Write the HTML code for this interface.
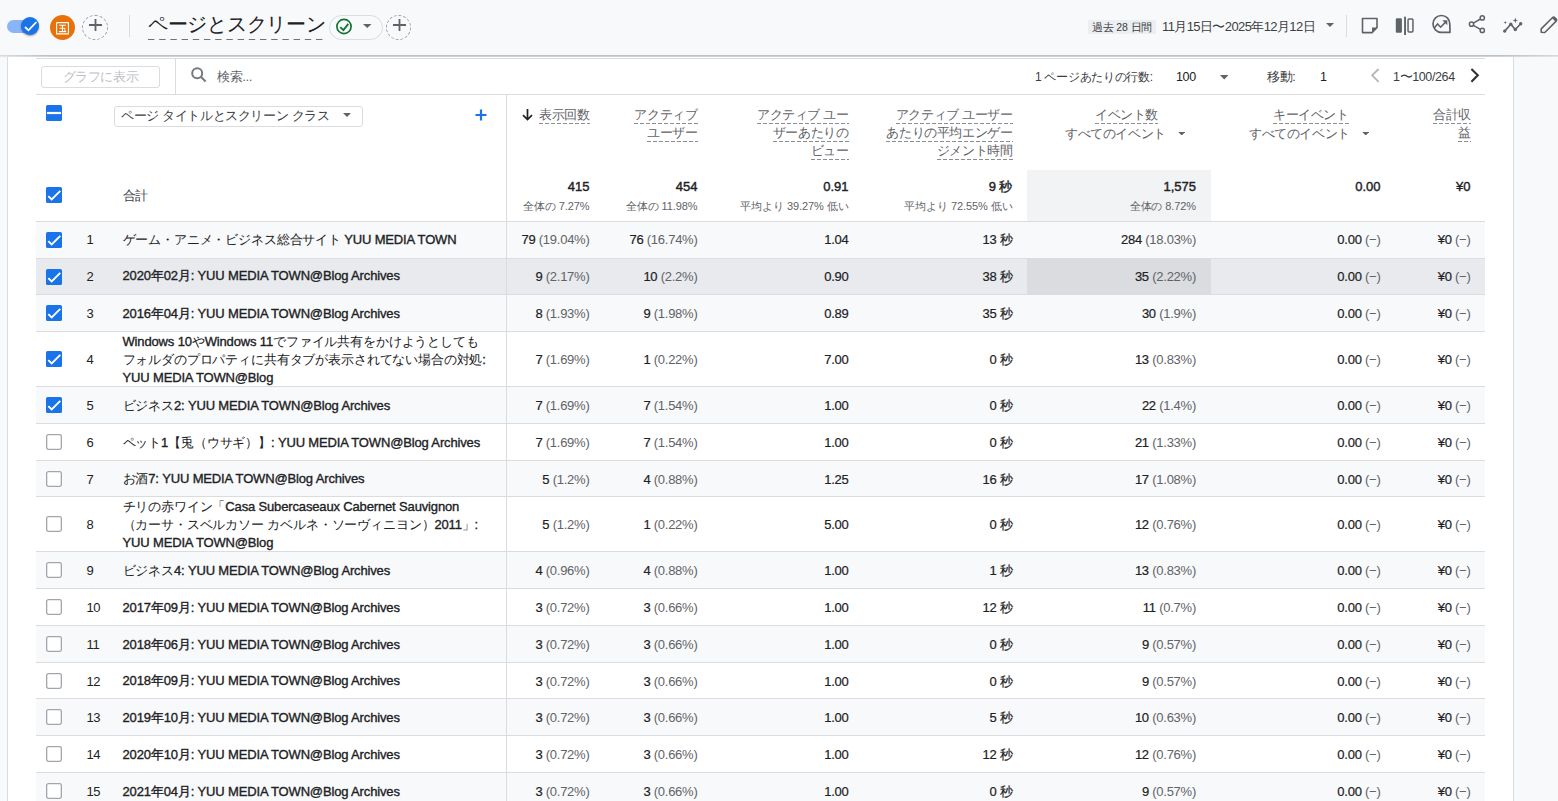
<!DOCTYPE html>
<html lang="ja"><head><meta charset="utf-8"><title>GA</title>
<style>
*{box-sizing:border-box;margin:0;padding:0}
html,body{letter-spacing:-0.38px;width:1558px;height:801px;overflow:hidden;background:#f8f9fa;font-family:"Liberation Sans",sans-serif;color:#202124;position:relative}
.abs{position:absolute;white-space:nowrap}
.hdr{position:absolute;left:0;top:0;width:1558px;height:55px;background:#f8f9fa}
.shadow{position:absolute;left:0;top:55px;width:1558px;height:1px;background:linear-gradient(90deg,#dcdcdc 0,#c0c0c0 50px,#c0c0c0 1500px,#d8d8d8 1558px)}
.shadow2{position:absolute;left:0;top:56px;width:1558px;height:1px;background:linear-gradient(90deg,#e6e6e6 0,#d2d2d2 50px,#d2d2d2 1500px,#e4e4e4 1558px)}
.panel{position:absolute;left:7px;top:57px;width:1507px;height:744px;background:#fff;border-left:1px solid #dadce0;border-right:1px solid #dadce0}
.hl{position:absolute;height:1px;background:#dadce0}
.vl{position:absolute;width:1px;background:#dadce0}
.row{position:absolute;left:36px;width:1449px}
.cb{position:absolute;left:46px;width:16px;height:16px}
.cb svg{display:block}
.num{position:absolute;left:86.5px;font-size:13px;color:#202124}
.ttl{position:absolute;left:122.5px;font-size:13px;line-height:18.33px;color:#202124}
.ttl .j{letter-spacing:-0.15px}
.ttl b{font-weight:normal;letter-spacing:-0.15px;-webkit-text-stroke:0.35px #202124}
.val{position:absolute;font-size:13px;letter-spacing:-0.25px;text-align:right;color:#202124;-webkit-text-stroke:0.2px #202124}
.val i{font-style:normal;color:#5f6368;-webkit-text-stroke:0}
.hd{position:absolute;font-size:13px;color:#5f6368;text-align:right;line-height:18px}
.hd u{text-decoration:none;padding-bottom:2px;background-image:linear-gradient(90deg,#8a8e93 4px,transparent 4px);background-size:6px 1px;background-repeat:repeat-x;background-position:0 100%}
.tot{position:absolute;font-size:13px;font-weight:normal;-webkit-text-stroke:0.4px #202124;letter-spacing:0px;text-align:right;color:#202124}
.sub{position:absolute;font-size:11px;letter-spacing:-0.1px;text-align:right;color:#5f6368}
</style></head><body>

<div class="hdr"></div>
<div class="abs" style="left:7px;top:20px;width:26px;height:13px;border-radius:7px;background:#8ab4f8"></div>
<div class="abs" style="left:21px;top:17px;width:18px;height:18px;border-radius:50%;background:#1a73e8;box-shadow:0 1px 2px rgba(0,0,0,.4)"><svg width="18" height="18" viewBox="0 0 18 18" style="display:block"><path d="M4 10 L7.5 13.3 L15.4 5" fill="none" stroke="#fff" stroke-width="1.8"/></svg></div>
<div class="abs" style="left:50px;top:15px;width:25px;height:25px;border-radius:50%;background:#e8710a"></div>
<svg class="abs" style="left:56px;top:22px" width="13" height="13" viewBox="0 0 13 13"><path d="M0.6 0.6H12.4V12.6M0.6 0.6V12.6M0.6 11.9H12.4M3.2 3.2H9.8M3.6 6.3H9.4M2.8 9.6H10.2M6.5 3.2V9.6M8.3 7.4L9.4 8.6" fill="none" stroke="#fff" stroke-width="1.1"/></svg>
<div class="abs" style="left:82px;top:15px;width:26px;height:25px;border-radius:50%;border:1px dashed #9aa0a6"></div>
<svg class="abs" style="left:89px;top:19px" width="13" height="12" viewBox="0 0 13 12"><path d="M6.5 0V12M0 6H13" stroke="#5f6368" stroke-width="1.8"/></svg>
<div class="vl" style="left:129px;top:15px;height:22px"></div>
<div class="abs" style="left:148px;top:11.5px;font-size:19.5px;line-height:24px;color:#202124;letter-spacing:-0.3px">ページとスクリーン</div>
<div class="abs" style="left:329px;top:15px;width:53.5px;height:25px;border-radius:13px;border:1px solid #dadce0;background:#f8f9fa"></div>
<svg class="abs" style="left:335px;top:17.5px" width="18" height="17" viewBox="0 0 18 17"><circle cx="9" cy="8.5" r="7.1" fill="none" stroke="#137333" stroke-width="1.7"/><path d="M5.2 9.1 L8.4 12.1 L13.3 5.9" fill="none" stroke="#137333" stroke-width="1.8"/></svg>
<svg class="abs" style="left:363px;top:24px" width="8.5" height="4" viewBox="0 0 10 5" preserveAspectRatio="none"><path d="M0 0H10L5 5Z" fill="#5f6368"/></svg>
<div class="abs" style="left:386px;top:15px;width:25px;height:25px;border-radius:50%;border:1px dashed #9aa0a6"></div>
<svg class="abs" style="left:392.5px;top:19px" width="13" height="12" viewBox="0 0 13 12"><path d="M6.5 0V12M0 6H13" stroke="#5f6368" stroke-width="1.8"/></svg>
<svg class="abs" style="left:148px;top:39px" width="177" height="1" viewBox="0 0 177 1"><line x1="0" y1="0.5" x2="177" y2="0.5" stroke="#6f7378" stroke-width="1" stroke-dasharray="6.4 4.8"/></svg>
<div class="abs" style="left:1088px;top:20px;width:68px;height:14px;background:#eceef1;font-size:10.5px;line-height:15px;color:#3c4043;text-align:center;letter-spacing:-0.1px">過去 28 日間</div>
<div class="abs" style="left:1162px;top:16.5px;font-size:13px;line-height:20px;color:#3c4043;letter-spacing:-0.6px">11月15日〜2025年12月12日</div>
<svg class="abs" style="left:1326px;top:23px" width="8" height="4" preserveAspectRatio="none" viewBox="0 0 10 5"><path d="M0 0H10L5 5Z" fill="#5f6368"/></svg>
<div class="vl" style="left:1346px;top:15px;height:22px"></div>
<svg class="abs" style="left:0;top:0" width="1558" height="55" viewBox="0 0 1558 55">
<g fill="none" stroke="#5f6368" stroke-width="1.6" stroke-linejoin="round">
<path d="M362.5 18.5H377V27.5L372 32.6H362.5Z" transform="translate(1000 0)"/>
</g>
<path d="M1372 33.2V27.6H1377.8Z" fill="#5f6368"/>
<rect x="1395.8" y="18.3" width="6.1" height="14.5" rx="1.2" fill="#5f6368"/>
<rect x="1404.1" y="16.7" width="1.9" height="18.3" fill="#5f6368"/>
<rect x="1408.05" y="19.05" width="4.9" height="13" rx="1" fill="none" stroke="#5f6368" stroke-width="1.5"/>
<path d="M1450 32.3H1441.3A8.4 8.4 0 1 1 1449.8 23.9Z" fill="none" stroke="#5f6368" stroke-width="1.7" stroke-linejoin="round"/>
<path d="M1434 28.2L1437.6 24L1440.6 27.2L1446 21.6" fill="none" stroke="#5f6368" stroke-width="1.6"/>
<path d="M1442.3 20.3H1447.3V25.3Z" fill="#5f6368"/>
<g fill="none" stroke="#5f6368" stroke-width="1.5">
<circle cx="1482.3" cy="17.9" r="2.1"/><circle cx="1471.5" cy="24.2" r="2.1"/><circle cx="1482.3" cy="30.4" r="2.1"/>
<path d="M1473.4 23.1L1480.4 19M1473.4 25.3L1480.4 29.3"/>
</g>
<path d="M1504.7 31.1L1510.8 24.2L1515.3 29.5L1520.7 23.8" fill="none" stroke="#5f6368" stroke-width="1.6"/>
<circle cx="1504.7" cy="31.1" r="1.7" fill="#5f6368"/><circle cx="1510.8" cy="24.2" r="1.7" fill="#5f6368"/><circle cx="1515.3" cy="29.5" r="1.7" fill="#5f6368"/><circle cx="1520.7" cy="23.8" r="1.7" fill="#5f6368"/>
<path d="M1515.3 17.6L1516 19.7L1518.1 20.4L1516 21.1L1515.3 23.2L1514.6 21.1L1512.5 20.4L1514.6 19.7Z" fill="#5f6368"/>
<path d="M1505.2 20.8L1505.6 22.1L1506.9 22.5L1505.6 22.9L1505.2 24.2L1504.8 22.9L1503.5 22.5L1504.8 22.1Z" fill="#5f6368"/>
<path d="M1541.2 32.2V28.9L1552.6 17.5A1.2 1.2 0 0 1 1554.3 17.5L1556.2 19.4A1.2 1.2 0 0 1 1556.2 21.1L1544.8 32.5Z" fill="none" stroke="#5f6368" stroke-width="1.6" stroke-linejoin="round"/>
<path d="M1552 18.2L1553.3 16.9A1.2 1.2 0 0 1 1555 16.9L1556.9 18.8A1.2 1.2 0 0 1 1556.9 20.5L1555.6 21.8Z" fill="#5f6368"/>
</svg>
<div class="shadow"></div><div class="shadow2"></div>
<div class="panel"></div>
<div class="hl" style="left:36px;top:58px;width:1449px"></div>
<div class="hl" style="left:36px;top:94px;width:1449px"></div>
<div class="vl" style="left:175px;top:59px;height:35px"></div>
<div class="abs" style="left:41px;top:66px;width:119px;height:22px;border:1px solid #dadce0;border-radius:3px;font-size:12.5px;line-height:20px;color:#bdc1c6;text-align:center">グラフに表示</div>
<svg class="abs" style="left:190px;top:66px" width="18" height="18" viewBox="0 0 18 18"><circle cx="7.2" cy="7.2" r="5" fill="none" stroke="#757a80" stroke-width="2"/><path d="M10.6 10.6L15.6 15.6" stroke="#757a80" stroke-width="2.1"/></svg>
<div class="abs" style="left:217px;top:67.5px;font-size:13px;line-height:18px;color:#5f6368">検索...</div>
<div class="abs" style="left:1035px;top:67.5px;font-size:12px;line-height:18px;color:#3c4043;letter-spacing:-0.3px">1 ページあたりの行数:</div>
<div class="abs" style="left:1176px;top:67.5px;font-size:12.5px;line-height:18px;color:#202124">100</div>
<svg class="abs" style="left:1220px;top:75px" width="8.5" height="4.5" preserveAspectRatio="none" viewBox="0 0 10 5"><path d="M0 0H10L5 5Z" fill="#5f6368"/></svg>
<div class="abs" style="left:1267px;top:67.5px;font-size:12.5px;line-height:18px;color:#3c4043">移動:</div>
<div class="abs" style="left:1320px;top:67.5px;font-size:12.5px;line-height:18px;color:#202124">1</div>
<svg class="abs" style="left:1369.5px;top:68px" width="10" height="15" viewBox="0 0 10 15"><path d="M8.6 1L2.2 7.3L8.6 13.8" fill="none" stroke="#b4b8bd" stroke-width="1.9"/></svg>
<div class="abs" style="left:1393px;top:68px;font-size:12.5px;line-height:18px;color:#3c4043">1〜100/264</div>
<svg class="abs" style="left:1470px;top:68px" width="10" height="15" viewBox="0 0 10 15"><path d="M1.4 1L7.8 7.3L1.4 13.8" fill="none" stroke="#303134" stroke-width="2.1"/></svg>
<div class="cb" style="top:105px"><svg width="16" height="16" viewBox="0 0 16 16"><rect x="0" y="0" width="16" height="16" rx="1.6" fill="#1a73e8"/><rect x="0.9" y="6.9" width="14.2" height="2.2" fill="#fff"/></svg></div>
<div class="abs" style="left:114px;top:105.5px;width:249px;height:21px;border:1px solid #dadce0;border-radius:3px;background:#fff"></div>
<div class="abs" style="left:121px;top:107px;font-size:13px;line-height:18px;color:#3c4043">ページ タイトルとスクリーン クラス</div>
<svg class="abs" style="left:343px;top:113px" width="8" height="4" viewBox="0 0 10 5"><path d="M0 0H10L5 5Z" fill="#5f6368"/></svg>
<svg class="abs" style="left:475px;top:109px" width="12" height="12" viewBox="0 0 12 12"><path d="M6 0.5V11.5M0.5 6H11.5" stroke="#1a73e8" stroke-width="2.2"/></svg>
<svg class="abs" style="left:521px;top:108px" width="13" height="13" viewBox="0 0 13 13"><path d="M6.5 1V11.5M2 7.2L6.5 11.5L11 7.2" fill="none" stroke="#202124" stroke-width="1.7"/></svg>
<div class="hd" style="right:968.5px;top:106px"><u>表示回数</u></div>
<div class="hd" style="right:860.5px;top:106px"><u>アクティブ</u><br><u>ユーザー</u></div>
<div class="hd" style="right:709.5px;top:106px"><u>アクティブ ユー</u><br><u>ザーあたりの</u><br><u>ビュー</u></div>
<div class="hd" style="right:545.5px;top:106px"><u>アクティブ ユーザー</u><br><u>あたりの平均エンゲー</u><br><u>ジメント時間</u></div>
<div class="hd" style="left:1095px;top:106px"><u>イベント数</u></div>
<div class="abs" style="left:1065px;top:125px;font-size:13px;line-height:18px;color:#5f6368">すべてのイベント</div>
<svg class="abs" style="left:1177.5px;top:131.5px" width="7.5" height="3.5" viewBox="0 0 10 5"><path d="M0 0H10L5 5Z" fill="#5f6368"/></svg>
<div class="hd" style="left:1273px;top:106px"><u>キーイベント</u></div>
<div class="abs" style="left:1249px;top:125px;font-size:13px;line-height:18px;color:#5f6368">すべてのイベント</div>
<svg class="abs" style="left:1361.5px;top:131.5px" width="7.5" height="3.5" viewBox="0 0 10 5"><path d="M0 0H10L5 5Z" fill="#5f6368"/></svg>
<div class="hd" style="right:87px;top:106px"><u>合計収</u><br><u>益</u></div>
<div class="abs" style="left:1027px;top:170px;width:184px;height:51.5px;background:#f1f3f4"></div>
<div class="cb" style="top:187px"><svg width="16" height="16" viewBox="0 0 16 16"><rect x="0" y="0" width="16" height="16" rx="1.6" fill="#1a73e8"/><path d="M2.3 9.1 L5.7 12.5 L14.3 3.9" fill="none" stroke="#fff" stroke-width="1.9"/></svg></div>
<div class="abs" style="left:122.5px;top:187px;font-size:13px;line-height:18px;color:#3c4043">合計</div>
<div class="tot" style="right:968.5px;top:178.5px;line-height:16px">415</div>
<div class="sub" style="right:968.5px;top:199px;line-height:15px">全体の 7.27%</div>
<div class="tot" style="right:860.5px;top:178.5px;line-height:16px">454</div>
<div class="sub" style="right:860.5px;top:199px;line-height:15px">全体の 11.98%</div>
<div class="tot" style="right:709.5px;top:178.5px;line-height:16px">0.91</div>
<div class="sub" style="right:709.5px;top:199px;line-height:15px">平均より 39.27% 低い</div>
<div class="tot" style="right:545.5px;top:178.5px;line-height:16px">9 秒</div>
<div class="sub" style="right:545.5px;top:199px;line-height:15px">平均より 72.55% 低い</div>
<div class="tot" style="right:362px;top:178.5px;line-height:16px">1,575</div>
<div class="sub" style="right:362px;top:199px;line-height:15px">全体の 8.72%</div>
<div class="tot" style="right:177.5px;top:178.5px;line-height:16px">0.00</div>
<div class="tot" style="right:87.5px;top:178.5px;line-height:16px">¥0</div>
<div class="hl" style="left:36px;top:221px;width:1449px"></div>
<div class="row" style="top:222px;height:36px;background:#f8f9fa"></div>
<div class="cb" style="top:232.20px"><svg width="16" height="16" viewBox="0 0 16 16"><rect x="0" y="0" width="16" height="16" rx="1.6" fill="#1a73e8"/><path d="M2.3 9.1 L5.7 12.5 L14.3 3.9" fill="none" stroke="#fff" stroke-width="1.9"/></svg></div>
<div class="num" style="top:231.00px;line-height:18px">1</div>
<div class="ttl" style="top:230.84px"><span class=j>ゲーム・アニメ・ビジネス総合サイト</span> <b>YUU MEDIA TOWN</b></div>
<div class="val" style="right:968.5px;top:231.00px;line-height:18px">79 <i>(19.04%)</i></div>
<div class="val" style="right:860.5px;top:231.00px;line-height:18px">76 <i>(16.74%)</i></div>
<div class="val" style="right:709.5px;top:231.00px;line-height:18px">1.04</div>
<div class="val" style="right:545.5px;top:231.00px;line-height:18px">13 秒</div>
<div class="val" style="right:362px;top:231.00px;line-height:18px">284 <i>(18.03%)</i></div>
<div class="val" style="right:177.5px;top:231.00px;line-height:18px">0.00 <i>(−)</i></div>
<div class="val" style="right:87.5px;top:231.00px;line-height:18px">¥0 <i>(−)</i></div>
<div class="row" style="top:259px;height:35px;background:#e8eaed"></div>
<div class="abs" style="left:1027px;top:259px;width:184px;height:35px;background:#dadce0"></div>
<div class="cb" style="top:268.70px"><svg width="16" height="16" viewBox="0 0 16 16"><rect x="0" y="0" width="16" height="16" rx="1.6" fill="#1a73e8"/><path d="M2.3 9.1 L5.7 12.5 L14.3 3.9" fill="none" stroke="#fff" stroke-width="1.9"/></svg></div>
<div class="num" style="top:267.50px;line-height:18px">2</div>
<div class="ttl" style="top:267.33px"><b>2020年02月: YUU MEDIA TOWN@Blog Archives</b></div>
<div class="val" style="right:968.5px;top:267.50px;line-height:18px">9 <i>(2.17%)</i></div>
<div class="val" style="right:860.5px;top:267.50px;line-height:18px">10 <i>(2.2%)</i></div>
<div class="val" style="right:709.5px;top:267.50px;line-height:18px">0.90</div>
<div class="val" style="right:545.5px;top:267.50px;line-height:18px">38 秒</div>
<div class="val" style="right:362px;top:267.50px;line-height:18px">35 <i>(2.22%)</i></div>
<div class="val" style="right:177.5px;top:267.50px;line-height:18px">0.00 <i>(−)</i></div>
<div class="val" style="right:87.5px;top:267.50px;line-height:18px">¥0 <i>(−)</i></div>
<div class="row" style="top:295px;height:36px;background:#f8f9fa"></div>
<div class="cb" style="top:305.20px"><svg width="16" height="16" viewBox="0 0 16 16"><rect x="0" y="0" width="16" height="16" rx="1.6" fill="#1a73e8"/><path d="M2.3 9.1 L5.7 12.5 L14.3 3.9" fill="none" stroke="#fff" stroke-width="1.9"/></svg></div>
<div class="num" style="top:305.00px;line-height:18px">3</div>
<div class="ttl" style="top:304.83px"><b>2016年04月: YUU MEDIA TOWN@Blog Archives</b></div>
<div class="val" style="right:968.5px;top:305.00px;line-height:18px">8 <i>(1.93%)</i></div>
<div class="val" style="right:860.5px;top:305.00px;line-height:18px">9 <i>(1.98%)</i></div>
<div class="val" style="right:709.5px;top:305.00px;line-height:18px">0.89</div>
<div class="val" style="right:545.5px;top:305.00px;line-height:18px">35 秒</div>
<div class="val" style="right:362px;top:305.00px;line-height:18px">30 <i>(1.9%)</i></div>
<div class="val" style="right:177.5px;top:305.00px;line-height:18px">0.00 <i>(−)</i></div>
<div class="val" style="right:87.5px;top:305.00px;line-height:18px">¥0 <i>(−)</i></div>
<div class="row" style="top:332px;height:54px;background:#fff"></div>
<div class="cb" style="top:351.20px"><svg width="16" height="16" viewBox="0 0 16 16"><rect x="0" y="0" width="16" height="16" rx="1.6" fill="#1a73e8"/><path d="M2.3 9.1 L5.7 12.5 L14.3 3.9" fill="none" stroke="#fff" stroke-width="1.9"/></svg></div>
<div class="num" style="top:351.00px;line-height:18px">4</div>
<div class="ttl" style="top:332.50px"><b>Windows 10</b><span class=j>や</span><b>Windows 11</b><span class=j>でファイル共有をかけようとしても</span><br><span class=j>フォルダのプロパティに共有タブが表示されてない場合の対処</span><b>:</b><br><b>YUU MEDIA TOWN@Blog</b></div>
<div class="val" style="right:968.5px;top:351.00px;line-height:18px">7 <i>(1.69%)</i></div>
<div class="val" style="right:860.5px;top:351.00px;line-height:18px">1 <i>(0.22%)</i></div>
<div class="val" style="right:709.5px;top:351.00px;line-height:18px">7.00</div>
<div class="val" style="right:545.5px;top:351.00px;line-height:18px">0 秒</div>
<div class="val" style="right:362px;top:351.00px;line-height:18px">13 <i>(0.83%)</i></div>
<div class="val" style="right:177.5px;top:351.00px;line-height:18px">0.00 <i>(−)</i></div>
<div class="val" style="right:87.5px;top:351.00px;line-height:18px">¥0 <i>(−)</i></div>
<div class="row" style="top:387px;height:36px;background:#f8f9fa"></div>
<div class="cb" style="top:397.20px"><svg width="16" height="16" viewBox="0 0 16 16"><rect x="0" y="0" width="16" height="16" rx="1.6" fill="#1a73e8"/><path d="M2.3 9.1 L5.7 12.5 L14.3 3.9" fill="none" stroke="#fff" stroke-width="1.9"/></svg></div>
<div class="num" style="top:397.00px;line-height:18px">5</div>
<div class="ttl" style="top:396.83px"><span class=j>ビジネス</span><b>2: YUU MEDIA TOWN@Blog Archives</b></div>
<div class="val" style="right:968.5px;top:397.00px;line-height:18px">7 <i>(1.69%)</i></div>
<div class="val" style="right:860.5px;top:397.00px;line-height:18px">7 <i>(1.54%)</i></div>
<div class="val" style="right:709.5px;top:397.00px;line-height:18px">1.00</div>
<div class="val" style="right:545.5px;top:397.00px;line-height:18px">0 秒</div>
<div class="val" style="right:362px;top:397.00px;line-height:18px">22 <i>(1.4%)</i></div>
<div class="val" style="right:177.5px;top:397.00px;line-height:18px">0.00 <i>(−)</i></div>
<div class="val" style="right:87.5px;top:397.00px;line-height:18px">¥0 <i>(−)</i></div>
<div class="row" style="top:424px;height:36px;background:#fff"></div>
<div class="cb" style="top:434.20px"><svg width="16" height="16" viewBox="0 0 16 16"><rect x="0.65" y="0.65" width="14.7" height="14.7" rx="1.8" fill="#fff" stroke="#a2a6ab" stroke-width="1.3"/></svg></div>
<div class="num" style="top:434.00px;line-height:18px">6</div>
<div class="ttl" style="top:433.83px"><span class=j>ペット</span><b>1</b><span class=j>【兎（ウサギ）】</span><b>: YUU MEDIA TOWN@Blog Archives</b></div>
<div class="val" style="right:968.5px;top:434.00px;line-height:18px">7 <i>(1.69%)</i></div>
<div class="val" style="right:860.5px;top:434.00px;line-height:18px">7 <i>(1.54%)</i></div>
<div class="val" style="right:709.5px;top:434.00px;line-height:18px">1.00</div>
<div class="val" style="right:545.5px;top:434.00px;line-height:18px">0 秒</div>
<div class="val" style="right:362px;top:434.00px;line-height:18px">21 <i>(1.33%)</i></div>
<div class="val" style="right:177.5px;top:434.00px;line-height:18px">0.00 <i>(−)</i></div>
<div class="val" style="right:87.5px;top:434.00px;line-height:18px">¥0 <i>(−)</i></div>
<div class="row" style="top:461px;height:35px;background:#f8f9fa"></div>
<div class="cb" style="top:470.70px"><svg width="16" height="16" viewBox="0 0 16 16"><rect x="0.65" y="0.65" width="14.7" height="14.7" rx="1.8" fill="#fff" stroke="#a2a6ab" stroke-width="1.3"/></svg></div>
<div class="num" style="top:470.50px;line-height:18px">7</div>
<div class="ttl" style="top:470.33px"><span class=j>お酒</span><b>7: YUU MEDIA TOWN@Blog Archives</b></div>
<div class="val" style="right:968.5px;top:470.50px;line-height:18px">5 <i>(1.2%)</i></div>
<div class="val" style="right:860.5px;top:470.50px;line-height:18px">4 <i>(0.88%)</i></div>
<div class="val" style="right:709.5px;top:470.50px;line-height:18px">1.25</div>
<div class="val" style="right:545.5px;top:470.50px;line-height:18px">16 秒</div>
<div class="val" style="right:362px;top:470.50px;line-height:18px">17 <i>(1.08%)</i></div>
<div class="val" style="right:177.5px;top:470.50px;line-height:18px">0.00 <i>(−)</i></div>
<div class="val" style="right:87.5px;top:470.50px;line-height:18px">¥0 <i>(−)</i></div>
<div class="row" style="top:497px;height:54px;background:#fff"></div>
<div class="cb" style="top:516.20px"><svg width="16" height="16" viewBox="0 0 16 16"><rect x="0.65" y="0.65" width="14.7" height="14.7" rx="1.8" fill="#fff" stroke="#a2a6ab" stroke-width="1.3"/></svg></div>
<div class="num" style="top:516.00px;line-height:18px">8</div>
<div class="ttl" style="top:497.50px"><span class=j>チリの赤ワイン「</span><b>Casa Subercaseaux Cabernet Sauvignon</b><br><span class=j>（カーサ・スベルカソー カベルネ・ソーヴィニヨン）</span><b>2011</b><span class=j>」</span><b>:</b><br><b>YUU MEDIA TOWN@Blog</b></div>
<div class="val" style="right:968.5px;top:516.00px;line-height:18px">5 <i>(1.2%)</i></div>
<div class="val" style="right:860.5px;top:516.00px;line-height:18px">1 <i>(0.22%)</i></div>
<div class="val" style="right:709.5px;top:516.00px;line-height:18px">5.00</div>
<div class="val" style="right:545.5px;top:516.00px;line-height:18px">0 秒</div>
<div class="val" style="right:362px;top:516.00px;line-height:18px">12 <i>(0.76%)</i></div>
<div class="val" style="right:177.5px;top:516.00px;line-height:18px">0.00 <i>(−)</i></div>
<div class="val" style="right:87.5px;top:516.00px;line-height:18px">¥0 <i>(−)</i></div>
<div class="row" style="top:552px;height:36px;background:#f8f9fa"></div>
<div class="cb" style="top:562.20px"><svg width="16" height="16" viewBox="0 0 16 16"><rect x="0.65" y="0.65" width="14.7" height="14.7" rx="1.8" fill="#fff" stroke="#a2a6ab" stroke-width="1.3"/></svg></div>
<div class="num" style="top:562.00px;line-height:18px">9</div>
<div class="ttl" style="top:561.84px"><span class=j>ビジネス</span><b>4: YUU MEDIA TOWN@Blog Archives</b></div>
<div class="val" style="right:968.5px;top:562.00px;line-height:18px">4 <i>(0.96%)</i></div>
<div class="val" style="right:860.5px;top:562.00px;line-height:18px">4 <i>(0.88%)</i></div>
<div class="val" style="right:709.5px;top:562.00px;line-height:18px">1.00</div>
<div class="val" style="right:545.5px;top:562.00px;line-height:18px">1 秒</div>
<div class="val" style="right:362px;top:562.00px;line-height:18px">13 <i>(0.83%)</i></div>
<div class="val" style="right:177.5px;top:562.00px;line-height:18px">0.00 <i>(−)</i></div>
<div class="val" style="right:87.5px;top:562.00px;line-height:18px">¥0 <i>(−)</i></div>
<div class="row" style="top:589px;height:36px;background:#fff"></div>
<div class="cb" style="top:599.20px"><svg width="16" height="16" viewBox="0 0 16 16"><rect x="0.65" y="0.65" width="14.7" height="14.7" rx="1.8" fill="#fff" stroke="#a2a6ab" stroke-width="1.3"/></svg></div>
<div class="num" style="top:599.00px;line-height:18px">10</div>
<div class="ttl" style="top:598.84px"><b>2017年09月: YUU MEDIA TOWN@Blog Archives</b></div>
<div class="val" style="right:968.5px;top:599.00px;line-height:18px">3 <i>(0.72%)</i></div>
<div class="val" style="right:860.5px;top:599.00px;line-height:18px">3 <i>(0.66%)</i></div>
<div class="val" style="right:709.5px;top:599.00px;line-height:18px">1.00</div>
<div class="val" style="right:545.5px;top:599.00px;line-height:18px">12 秒</div>
<div class="val" style="right:362px;top:599.00px;line-height:18px">11 <i>(0.7%)</i></div>
<div class="val" style="right:177.5px;top:599.00px;line-height:18px">0.00 <i>(−)</i></div>
<div class="val" style="right:87.5px;top:599.00px;line-height:18px">¥0 <i>(−)</i></div>
<div class="row" style="top:626px;height:36px;background:#f8f9fa"></div>
<div class="cb" style="top:636.20px"><svg width="16" height="16" viewBox="0 0 16 16"><rect x="0.65" y="0.65" width="14.7" height="14.7" rx="1.8" fill="#fff" stroke="#a2a6ab" stroke-width="1.3"/></svg></div>
<div class="num" style="top:636.00px;line-height:18px">11</div>
<div class="ttl" style="top:635.84px"><b>2018年06月: YUU MEDIA TOWN@Blog Archives</b></div>
<div class="val" style="right:968.5px;top:636.00px;line-height:18px">3 <i>(0.72%)</i></div>
<div class="val" style="right:860.5px;top:636.00px;line-height:18px">3 <i>(0.66%)</i></div>
<div class="val" style="right:709.5px;top:636.00px;line-height:18px">1.00</div>
<div class="val" style="right:545.5px;top:636.00px;line-height:18px">0 秒</div>
<div class="val" style="right:362px;top:636.00px;line-height:18px">9 <i>(0.57%)</i></div>
<div class="val" style="right:177.5px;top:636.00px;line-height:18px">0.00 <i>(−)</i></div>
<div class="val" style="right:87.5px;top:636.00px;line-height:18px">¥0 <i>(−)</i></div>
<div class="row" style="top:663px;height:35px;background:#fff"></div>
<div class="cb" style="top:672.70px"><svg width="16" height="16" viewBox="0 0 16 16"><rect x="0.65" y="0.65" width="14.7" height="14.7" rx="1.8" fill="#fff" stroke="#a2a6ab" stroke-width="1.3"/></svg></div>
<div class="num" style="top:672.50px;line-height:18px">12</div>
<div class="ttl" style="top:672.34px"><b>2018年09月: YUU MEDIA TOWN@Blog Archives</b></div>
<div class="val" style="right:968.5px;top:672.50px;line-height:18px">3 <i>(0.72%)</i></div>
<div class="val" style="right:860.5px;top:672.50px;line-height:18px">3 <i>(0.66%)</i></div>
<div class="val" style="right:709.5px;top:672.50px;line-height:18px">1.00</div>
<div class="val" style="right:545.5px;top:672.50px;line-height:18px">0 秒</div>
<div class="val" style="right:362px;top:672.50px;line-height:18px">9 <i>(0.57%)</i></div>
<div class="val" style="right:177.5px;top:672.50px;line-height:18px">0.00 <i>(−)</i></div>
<div class="val" style="right:87.5px;top:672.50px;line-height:18px">¥0 <i>(−)</i></div>
<div class="row" style="top:699px;height:36px;background:#f8f9fa"></div>
<div class="cb" style="top:709.20px"><svg width="16" height="16" viewBox="0 0 16 16"><rect x="0.65" y="0.65" width="14.7" height="14.7" rx="1.8" fill="#fff" stroke="#a2a6ab" stroke-width="1.3"/></svg></div>
<div class="num" style="top:709.00px;line-height:18px">13</div>
<div class="ttl" style="top:708.84px"><b>2019年10月: YUU MEDIA TOWN@Blog Archives</b></div>
<div class="val" style="right:968.5px;top:709.00px;line-height:18px">3 <i>(0.72%)</i></div>
<div class="val" style="right:860.5px;top:709.00px;line-height:18px">3 <i>(0.66%)</i></div>
<div class="val" style="right:709.5px;top:709.00px;line-height:18px">1.00</div>
<div class="val" style="right:545.5px;top:709.00px;line-height:18px">5 秒</div>
<div class="val" style="right:362px;top:709.00px;line-height:18px">10 <i>(0.63%)</i></div>
<div class="val" style="right:177.5px;top:709.00px;line-height:18px">0.00 <i>(−)</i></div>
<div class="val" style="right:87.5px;top:709.00px;line-height:18px">¥0 <i>(−)</i></div>
<div class="row" style="top:736px;height:36px;background:#fff"></div>
<div class="cb" style="top:746.20px"><svg width="16" height="16" viewBox="0 0 16 16"><rect x="0.65" y="0.65" width="14.7" height="14.7" rx="1.8" fill="#fff" stroke="#a2a6ab" stroke-width="1.3"/></svg></div>
<div class="num" style="top:746.00px;line-height:18px">14</div>
<div class="ttl" style="top:745.84px"><b>2020年10月: YUU MEDIA TOWN@Blog Archives</b></div>
<div class="val" style="right:968.5px;top:746.00px;line-height:18px">3 <i>(0.72%)</i></div>
<div class="val" style="right:860.5px;top:746.00px;line-height:18px">3 <i>(0.66%)</i></div>
<div class="val" style="right:709.5px;top:746.00px;line-height:18px">1.00</div>
<div class="val" style="right:545.5px;top:746.00px;line-height:18px">12 秒</div>
<div class="val" style="right:362px;top:746.00px;line-height:18px">12 <i>(0.76%)</i></div>
<div class="val" style="right:177.5px;top:746.00px;line-height:18px">0.00 <i>(−)</i></div>
<div class="val" style="right:87.5px;top:746.00px;line-height:18px">¥0 <i>(−)</i></div>
<div class="row" style="top:773px;height:36px;background:#f8f9fa"></div>
<div class="cb" style="top:783.20px"><svg width="16" height="16" viewBox="0 0 16 16"><rect x="0.65" y="0.65" width="14.7" height="14.7" rx="1.8" fill="#fff" stroke="#a2a6ab" stroke-width="1.3"/></svg></div>
<div class="num" style="top:783.00px;line-height:18px">15</div>
<div class="ttl" style="top:782.84px"><b>2021年04月: YUU MEDIA TOWN@Blog Archives</b></div>
<div class="val" style="right:968.5px;top:783.00px;line-height:18px">3 <i>(0.72%)</i></div>
<div class="val" style="right:860.5px;top:783.00px;line-height:18px">3 <i>(0.66%)</i></div>
<div class="val" style="right:709.5px;top:783.00px;line-height:18px">1.00</div>
<div class="val" style="right:545.5px;top:783.00px;line-height:18px">0 秒</div>
<div class="val" style="right:362px;top:783.00px;line-height:18px">9 <i>(0.57%)</i></div>
<div class="val" style="right:177.5px;top:783.00px;line-height:18px">0.00 <i>(−)</i></div>
<div class="val" style="right:87.5px;top:783.00px;line-height:18px">¥0 <i>(−)</i></div>
<div class="hl" style="left:36px;top:258px;width:1449px"></div>
<div class="hl" style="left:36px;top:294px;width:1449px"></div>
<div class="hl" style="left:36px;top:331px;width:1449px"></div>
<div class="hl" style="left:36px;top:386px;width:1449px"></div>
<div class="hl" style="left:36px;top:423px;width:1449px"></div>
<div class="hl" style="left:36px;top:460px;width:1449px"></div>
<div class="hl" style="left:36px;top:496px;width:1449px"></div>
<div class="hl" style="left:36px;top:551px;width:1449px"></div>
<div class="hl" style="left:36px;top:588px;width:1449px"></div>
<div class="hl" style="left:36px;top:625px;width:1449px"></div>
<div class="hl" style="left:36px;top:662px;width:1449px"></div>
<div class="hl" style="left:36px;top:698px;width:1449px"></div>
<div class="hl" style="left:36px;top:735px;width:1449px"></div>
<div class="hl" style="left:36px;top:772px;width:1449px"></div>
<div class="hl" style="left:36px;top:809px;width:1449px"></div>
<div class="vl" style="left:506px;top:95px;height:706px"></div>
</body></html>
